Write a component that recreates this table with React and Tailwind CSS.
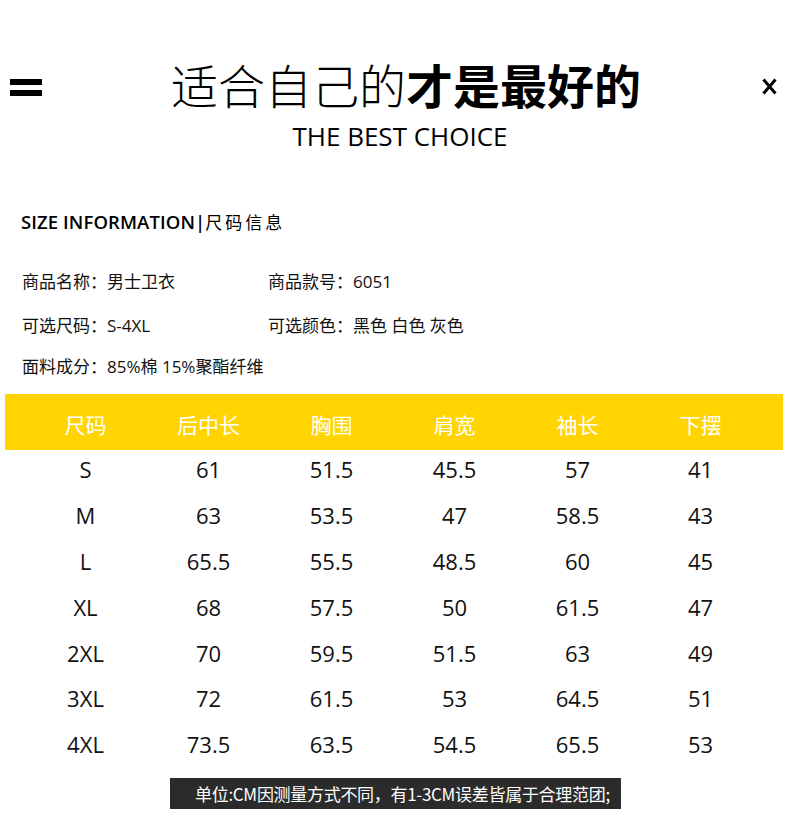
import React from "react";

const headers = ["尺码", "后中长", "胸围", "肩宽", "袖长", "下摆"];

const rows = [
  ["S", "61", "51.5", "45.5", "57", "41"],
  ["M", "63", "53.5", "47", "58.5", "43"],
  ["L", "65.5", "55.5", "48.5", "60", "45"],
  ["XL", "68", "57.5", "50", "61.5", "47"],
  ["2XL", "70", "59.5", "51.5", "63", "49"],
  ["3XL", "72", "61.5", "53", "64.5", "51"],
  ["4XL", "73.5", "63.5", "54.5", "65.5", "53"],
];

const App = () => {
  return (
    <div className="w-[790px] h-[819px] bg-white text-black overflow-hidden font-['Open_Sans','Noto_Sans_CJK_SC',sans-serif]">
      {/* top bar */}
      <div className="flex items-center h-[48px] mt-[63px] pl-[10px] pr-[13px]">
        <div className="flex flex-col gap-[5px] w-[32px]">
          <span className="block h-[6px] bg-black" />
          <span className="block h-[6px] bg-black" />
        </div>
        <h1 className="flex-1 text-center pl-[8px] -mt-[6px] text-[47px] leading-[48px] font-['Noto_Sans_CJK_SC',sans-serif]">
          <span className="font-light">适合自己的</span>
          <span className="font-bold">才是最好的</span>
        </h1>
        <svg width="15" height="17" viewBox="0 0 15 17" className="mt-[-1px]">
          <path d="M1.5 1.5 L13.5 15.5 M13.5 1.5 L1.5 15.5" stroke="#000" strokeWidth="3" />
        </svg>
      </div>
      <p className="mt-[10px] text-center pl-[10px] text-[26px] leading-[30px]">THE BEST CHOICE</p>

      {/* size info */}
      <div className="mt-[59px] ml-[21px] text-[18.5px] leading-[24px] font-semibold tracking-[0.1px]">
        SIZE INFORMATION|
        <span className="font-['Noto_Sans_CJK_SC',sans-serif] font-normal text-[17px] tracking-[3px]">尺码信息</span>
      </div>

      <div className="mt-[36px] ml-[22px] text-[17px] leading-[24px] text-[#111] flex flex-col gap-[20px]">
        <div className="flex">
          <span className="w-[246px]">商品名称：男士卫衣</span>
          <span>商品款号：6051</span>
        </div>
        <div className="flex">
          <span className="w-[246px]">可选尺码：S-4XL</span>
          <span>可选颜色：黑色 白色 灰色</span>
        </div>
        <div className="flex -mt-[3px]">
          <span>面料成分：85%棉 15%聚酯纤维</span>
        </div>
      </div>

      {/* table */}
      <div className="mt-[15px] ml-[5px] w-[778px]">
        <div className="h-[56px] bg-[#ffd400] grid grid-cols-[repeat(6,123px)] pl-[19px] items-center pt-[6px] text-white text-[21px] font-['Noto_Sans_CJK_SC',sans-serif]">
          {headers.map((h) => (
            <div key={h} className="text-center">{h}</div>
          ))}
        </div>
        {rows.map((r) => (
          <div key={r[0]} className="h-[45.8px] grid grid-cols-[repeat(6,123px)] pl-[19px] items-center pb-[6px] text-[22px] text-[#111]">
            {r.map((c, i) => (
              <div key={i} className="text-center">{c}</div>
            ))}
          </div>
        ))}
      </div>

      {/* note */}
      <div className="mt-[7px] ml-[170px] w-[451px] h-[31px] bg-[#2b2b2b] text-white text-[17px] leading-[31px] pl-[25px] tracking-[-0.3px] font-['Noto_Sans_CJK_SC',sans-serif]">
        单位:CM因测量方式不同，有1-3CM误差皆属于合理范团;
      </div>
    </div>
  );
};

export default App;
